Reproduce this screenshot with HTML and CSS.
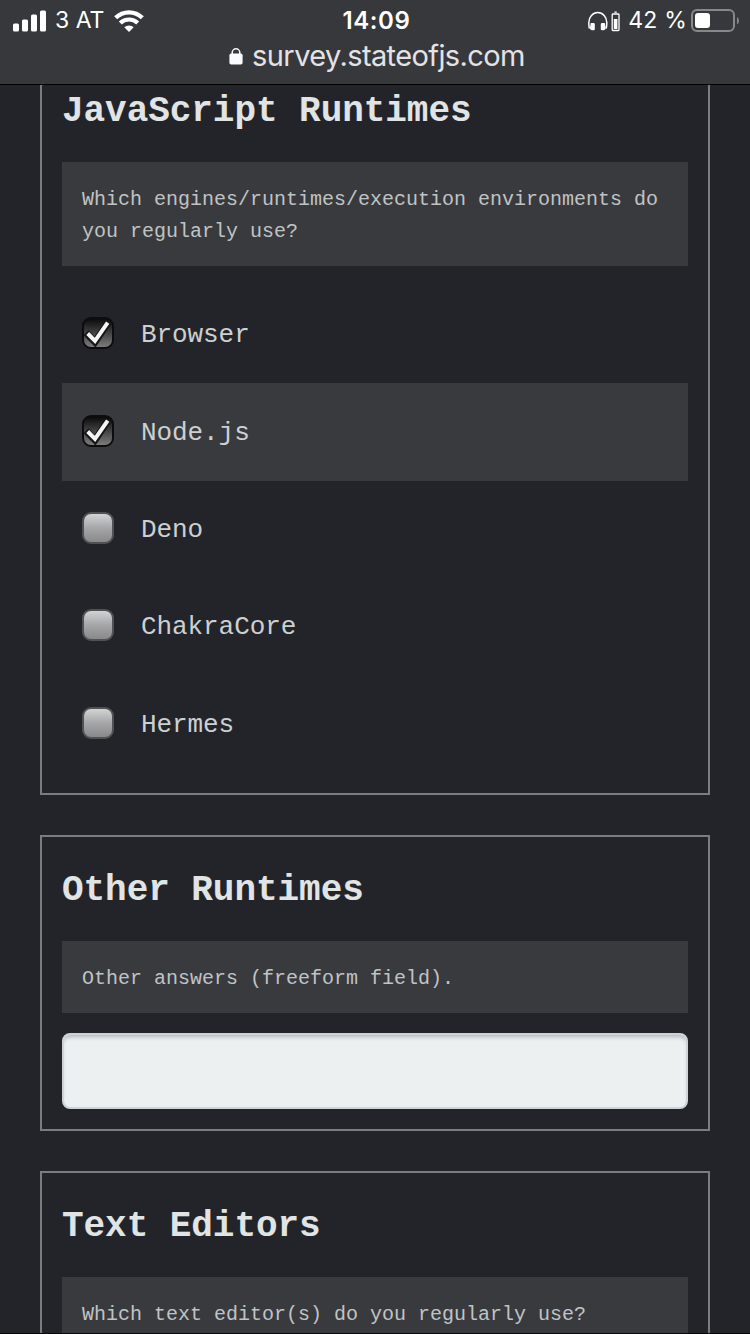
FILE: index.html
```html
<!DOCTYPE html>
<html lang="en">
<head>
<meta charset="utf-8">
<title>State of JS Survey</title>
<link rel="stylesheet" href="styles.css">
</head>
<body>
<div class="screen">
  <header class="chrome">
    <div class="status">
      <div class="status-left">
        <svg class="signal" width="34" height="22" viewBox="0 0 34 22" fill="#fff"><rect x="0" y="13.500" width="6" height="8" rx="1.500"/><rect x="9" y="9.500" width="6" height="12" rx="1.500"/><rect x="18" y="4.500" width="6" height="17" rx="1.500"/><rect x="27" y="0.500" width="6" height="21" rx="1.500"/></svg>
        <span class="carrier">3 AT</span>
        <svg class="wifi" width="30" height="22" viewBox="0 0 30 22" fill="none" stroke="#fff"><path d="M1.700 7.800a19 19 0 0 1 26.600 0" stroke-width="4.400"/><path d="M6.300 13a12.500 12.500 0 0 1 17.400 0" stroke-width="4.200"/><path d="M10.300 17.300a6.800 6.800 0 0 1 9.400 0L15 22z" fill="#fff" stroke="none"/></svg>
      </div>
      <time class="clock">14:09</time>
      <div class="status-right">
        <svg class="headset" width="32" height="22" viewBox="0 0 32 22"><path d="M1.400 18.500Q.8 17 .8 12.500a8.900 9.800 0 0 1 18 0q0 4.500-.6 6" fill="none" stroke="#fff" stroke-width="1.500"/><path d="M2.800 13h2.700q1.300 0 1.300 1.300v4.900q0 1-1.300 1H4q-1.500 0-2.200-2zM16.800 13h-2.700q-1.300 0-1.300 1.300v4.900q0 1 1.300 1h1.500q1.500 0 2.200-2z" fill="#fff"/><rect x="24.200" y="4" width="6.800" height="16.500" rx=".8" fill="none" stroke="#fff" stroke-width="1.300"/><rect x="26.400" y="1.500" width="2.400" height="1.300" fill="#fff"/><rect x="25.800" y="9" width="3.600" height="10" fill="#fff"/></svg>
        <span class="percent">42 %</span>
        <svg class="battery" width="49" height="24" viewBox="0 0 49 24"><rect x="1" y="1" width="42" height="21" rx="5" fill="none" stroke="#87888a" stroke-width="2"/><rect x="4" y="4" width="15" height="15" rx="3" fill="#fff"/><path d="M46 8q2 1 2 3.700T46 15.500z" fill="#87888a"/></svg>
      </div>
    </div>
    <div class="address">
      <svg width="14" height="17" viewBox="0 0 14 17"><path d="M3.200 8V4.600a3.800 3.800 0 0 1 7.600 0V8" fill="none" stroke="#f5f5f8" stroke-width="1.500"/><rect x=".4" y="5.500" width="13.200" height="11" rx="1.800" fill="#fafaff"/></svg>
      <span class="domain">survey.stateofjs.com</span>
    </div>
  </header>
  <main class="page">
    <div class="questions">
      <section class="card">
        <h3 class="title">JavaScript Runtimes</h3>
        <p class="help">Which engines/runtimes/execution environments do you regularly use?</p>
        <div class="options">
          <label class="option"><span class="box box-on"><svg width="32" height="32" viewBox="0 0 32 32" fill="none"><path d="M4 15.800l9 9.200L26.600 4.800" stroke="#161616" stroke-width="7"/><path d="M5.700 16.500l7.300 7.300L25.700 5.700" stroke="#f5f5f5" stroke-width="4"/></svg></span>Browser</label>
          <label class="option option-active"><span class="box box-on"><svg width="32" height="32" viewBox="0 0 32 32" fill="none"><path d="M4 15.800l9 9.200L26.600 4.800" stroke="#161616" stroke-width="7"/><path d="M5.700 16.500l7.300 7.300L25.700 5.700" stroke="#f5f5f5" stroke-width="4"/></svg></span>Node.js</label>
          <label class="option"><span class="box"></span>Deno</label>
          <label class="option"><span class="box"></span>ChakraCore</label>
          <label class="option"><span class="box"></span>Hermes</label>
        </div>
      </section>
      <section class="card">
        <h3 class="title">Other Runtimes</h3>
        <p class="help">Other answers (freeform field).</p>
        <input class="field" type="text">
      </section>
      <section class="card">
        <h3 class="title">Text Editors</h3>
        <p class="help">Which text editor(s) do you regularly use?</p>
      </section>
    </div>
  </main>
</div>
</body>
</html>
```
FILE: styles.css
```css
* { box-sizing: border-box; }
body { margin: 0; background: #232429; }
.screen {
  width: 750px;
  height: 1334px;
  display: flex;
  flex-direction: column;
  overflow: hidden;
  border-bottom: 1px solid #08080a;
}
.chrome {
  flex: none;
  height: 85px;
  background: #37383b;
  border-bottom: 1px solid #000;
  color: #fff;
  font-family: Inter, "Liberation Sans", sans-serif;
}
.status {
  height: 40px;
  display: grid;
  grid-template-columns: 1fr auto 1fr;
  align-items: center;
  padding: 1px 10px 0 13px;
  font-size: 23px;
  line-height: 39px;
}
.status-left, .status-right { display: flex; align-items: center; }
.status-right { justify-content: flex-end; }
.signal { margin-right: 8px; }
.wifi { margin-left: 10px; }
.carrier { letter-spacing: 0; }
.clock { font-size: 24px; font-weight: 600; letter-spacing: 0.6px; }
.percent { margin: 0 4px 0 8px; letter-spacing: 0.2px; }
.address {
  display: flex;
  justify-content: center;
  align-items: center;
  gap: 9px;
  height: 32px;
  padding-left: 4px;
}
.domain {
  color: #e3e3e6;
  font-size: 29px;
  line-height: 32px;
  letter-spacing: -0.6px;
}
.page { flex: 1; min-height: 0; overflow: hidden; }
.questions {
  display: flex;
  flex-direction: column;
  gap: 40px;
  margin-top: -29px;
  padding: 0 40px;
  font-family: "Liberation Mono", monospace;
  color: #e0e4e4;
}
.card { border: 2px solid #7b7c7f; padding: 20px; }
.title {
  margin: 0;
  padding-top: 2px;
  height: 84px;
  font-size: 36px;
  line-height: 64px;
  letter-spacing: -0.05px;
  font-weight: 700;
}
.help {
  margin: 0 0 20px;
  padding: 22px 20px 18px;
  background: #393a3e;
  color: #c0c3c4;
  font-size: 20px;
  line-height: 32px;
}
.option {
  display: flex;
  align-items: center;
  gap: 27px;
  height: 97.4px;
  padding: 1px 20px 0;
  color: #cdd0d1;
  font-size: 26px;
  line-height: 40px;
  letter-spacing: -0.08px;
}
.option-active { background: #393a3e; }
.box {
  flex: none;
  width: 32px;
  height: 32px;
  margin-bottom: 4px;
  border: 2px solid #505153;
  border-radius: 9px;
  background: linear-gradient(#d3d3d4, #a5a6a8 50%, #89898b);
}
.box-on {
  border-color: #0d0d0f;
  background: linear-gradient(#0b0b0c, #3d3d3e 45%, #7c7c7d);
}
.box svg { display: block; margin: -2px; }
.field {
  display: block;
  width: 100%;
  height: 76px;
  border: 2px solid #ced3d9;
  border-radius: 8px;
  background: #ecf0f1;
  box-shadow: inset 0 4px 4px -2px #b4b8ba;
}
```
